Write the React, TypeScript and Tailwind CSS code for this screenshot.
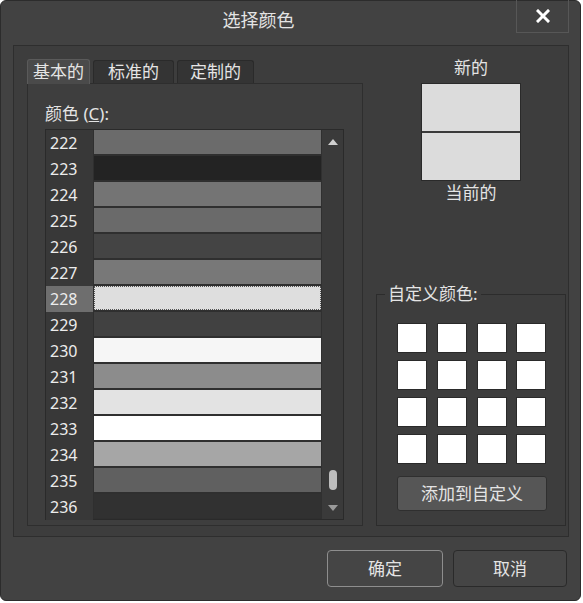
import React from "react";

const rows: { n: number; c: string }[] = [
  { n: 222, c: "#6b6b6b" },
  { n: 223, c: "#232323" },
  { n: 224, c: "#747474" },
  { n: 225, c: "#6a6a6a" },
  { n: 226, c: "#444444" },
  { n: 227, c: "#787878" },
  { n: 228, c: "#dedede" },
  { n: 229, c: "#414141" },
  { n: 230, c: "#f6f6f6" },
  { n: 231, c: "#8c8c8c" },
  { n: 232, c: "#e3e3e3" },
  { n: 233, c: "#ffffff" },
  { n: 234, c: "#a6a6a6" },
  { n: 235, c: "#606060" },
  { n: 236, c: "#313131" },
];

const font = { fontFamily: '"Noto Sans", "Noto Sans CJK SC", sans-serif' };

export default function App() {
  return (
    <div className="w-[583px] h-[603px] bg-white" style={font}>
      <div className="w-[581px] h-[601px] bg-[#424242] rounded-[6px] border border-[#2c2c2c] flex flex-col text-[#e4e4e4]">
        {/* title bar */}
        <div className="flex h-[44px]">
          <div className="w-[515px] flex justify-center pt-[6px] text-[18px] leading-[26px]">选择颜色</div>
          <div className="w-[53px] h-[33px] border-x border-b border-[#575757] flex items-center justify-center mt-[-1px]">
            <svg width="14" height="14" viewBox="0 0 14 14">
              <path d="M2 2 L12 12 M12 2 L2 12" stroke="#ffffff" strokeWidth="3" strokeLinecap="square" />
            </svg>
          </div>
        </div>
        {/* inner panel */}
        <div className="ml-[12px] w-[556px] h-[492px] border border-[#2e2e2e] bg-[#3d3d3d] flex pl-[13px] pt-[12px]">
          {/* left column */}
          <div className="w-[336px] flex flex-col">
            <div className="flex h-[25px] items-end gap-[3px]">
              <div className="h-[25px] px-[5px] bg-[#4a4a4a] border-t border-x border-[#5a5a5a] rounded-t-[3px] text-[17px] leading-[23px] z-10 mb-[-1px] relative">基本的</div>
              <div className="h-[23px] px-[14px] bg-[#343434] border-t border-x border-[#2a2a2a] rounded-t-[3px] text-[17px] leading-[22px]">标准的</div>
              <div className="h-[23px] px-[12px] bg-[#343434] border-t border-x border-[#2a2a2a] rounded-t-[3px] text-[17px] leading-[22px]">定制的</div>
            </div>
            <div className="h-[443px] border border-[#2e2e2e] bg-[#3e3e3e] pl-[17px] pt-[19px]">
              <div className="text-[17px] leading-[22px] h-[26px]">
                颜色 (<span className="underline">C</span>):
              </div>
              <div className="w-[299px] h-[391px] border border-[#2a2a2a] flex">
                <div className="w-[275px] flex flex-col bg-[#2f2f2f]">
                  {rows.map((r) => (
                    <div key={r.n} className="h-[26px] flex">
                      <div
                        className={
                          (r.n === 228 ? "bg-[#6e6e6e]" : "bg-[#383838]") +
                          " w-[47px] text-[16px] leading-[26px] pl-[4px] text-[#ececec]"
                        }
                      >
                        {r.n}
                      </div>
                      <div className="flex-1 pb-[2px] pl-[1px]">
                        <div
                          className={
                            "h-full " + (r.n === 228 ? "border border-dotted border-[#555]" : "")
                          }
                          style={{ backgroundColor: r.c }}
                        />
                      </div>
                    </div>
                  ))}
                </div>
                <div className="flex-1 bg-[#3a3a3a] border-l border-[#303030] flex flex-col items-center relative">
                  <svg width="10" height="6" viewBox="0 0 10 6" className="mt-[9px]">
                    <path d="M0 6 L5 0 L10 6 Z" fill="#cfcfcf" />
                  </svg>
                  <div className="absolute top-[340px] left-[7px] w-[8px] h-[20px] rounded-full bg-[#bdbdbd]" />
                  <svg width="10" height="6" viewBox="0 0 10 6" className="absolute top-[375px] left-[6px]">
                    <path d="M0 0 L10 0 L5 6 Z" fill="#9a9a9a" />
                  </svg>
                </div>
              </div>
            </div>
          </div>
          {/* right column */}
          <div className="w-[190px] ml-[13px] flex flex-col items-center">
            <div className="text-[17px] leading-[22px] mt-[-1px]">新的</div>
            <div className="w-[100px] h-[98px] mt-[4px] border border-[#2a2a2a] bg-[#dcdcdc] flex flex-col">
              <div className="flex-1 border-b-2 border-[#3a3a3a]" />
              <div className="flex-1" />
            </div>
            <div className="text-[17px] leading-[22px] mt-[1px]">当前的</div>
            <div className="mt-[90px] w-[190px] h-[232px] border border-[#2c2c2c] relative px-[20px] pt-[28px]">
              <div className="absolute top-[-12px] left-[8px] px-[3px] bg-[#3d3d3d] text-[17px] leading-[22px]">自定义颜色:</div>
              <div className="grid grid-cols-4 gap-x-[11px] gap-y-[7px]">
                {Array.from({ length: 16 }).map((_, i) => (
                  <div key={i} className="w-[30px] h-[30px] bg-white border border-[#2a2a2a]" />
                ))}
              </div>
              <div className="mt-[12px] w-[150px] h-[35px] rounded-[3px] bg-[#565656] border border-[#2f2f2f] flex items-center justify-center text-[17px]">
                添加到自定义
              </div>
            </div>
          </div>
        </div>
        {/* bottom buttons */}
        <div className="flex justify-end gap-[10px] pr-[13px] mt-[13px]">
          <div className="w-[116px] h-[37px] rounded-[4px] border border-[#8e8e8e] bg-[#454545] flex items-center justify-center text-[17px]">确定</div>
          <div className="w-[114px] h-[37px] rounded-[4px] border border-[#2a2a2a] bg-[#454545] flex items-center justify-center text-[17px]">取消</div>
        </div>
      </div>
    </div>
  );
}
